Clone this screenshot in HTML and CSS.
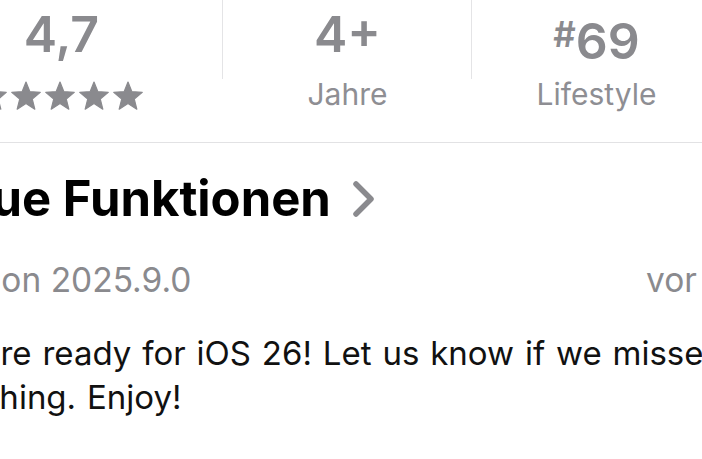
FILE: index.html
```html
<!DOCTYPE html>
<html lang="de">
    <head>
        <meta charset="UTF-8">
        <meta name="viewport" content="width=device-width, initial-scale=1.0">
        <title>App Store – Neue Funktionen</title>
        <link rel="stylesheet" href="styles.css">
    </head>
    <body>
        <div class="stats">
            <div class="stat">
                <div class="stat-value">4,7</div>
                <div class="stars">
                    <svg viewBox="0 0 170 30" width="170" height="30">
                        <g fill="#8a8a8e" stroke="#8a8a8e" stroke-width="1.2" stroke-linejoin="round">
                            <path id="star" d="M15 1L18.88 10.66 29.27 11.36 21.28 18.04 23.82 28.14 15 22.6 6.18 28.14 8.72 18.04 0.73 11.36 11.12 10.66Z"/>
                            <use href="#star" x="34"/>
                            <use href="#star" x="68"/>
                            <use href="#star" x="102"/>
                            <use href="#star" x="136"/>
                        </g>
                    </svg>
                </div>
            </div>
            <div class="stat">
                <div class="stat-value">4+</div>
                <div class="stat-label">Jahre</div>
            </div>
            <div class="stat">
                <div class="stat-value"><span class="hash">#</span>69</div>
                <div class="stat-label">Lifestyle</div>
            </div>
        </div>

        <div class="content">
            <h2 class="section-title">
                Neue Funktionen
                <svg class="chevron" viewBox="0 0 24 38" width="24" height="38">
                    <path d="M4 4l15 15-15 15" fill="none" stroke="#8a8a8e" stroke-width="5.5" stroke-linecap="round" stroke-linejoin="round"/>
                </svg>
            </h2>
            <div class="version-row">
                <span class="version">Version 2025.9.0</span>
                <span>vor 2 Tagen</span>
            </div>
            <p class="notes">We're ready for iOS 26! Let us know if we missed anything. Enjoy!</p>
        </div>
    </body>
</html>
```

FILE: styles.css
```css
body, html {
    margin: 0;
    height: 100%;
    background: #fff;
    overflow: hidden;
    font-family: Inter, "Noto Sans", sans-serif;
}

/* info row: rating, age, charts */
.stats {
    display: flex;
    margin-left: -100px;
    height: 142px;
    border-bottom: 1px solid #e2e2e4;
}
.stat {
    flex: 0 0 249px;
    display: flex;
    flex-direction: column;
    align-items: center;
    background: linear-gradient(#e4e4e6, #e4e4e6) right top / 1px 79px no-repeat;
}
.stat:first-child {
    flex-basis: 323px;
}
.stat-value {
    height: 58px;
    margin-top: 5px;
    font-size: 50px;
    font-weight: 600;
    line-height: 58px;
    color: #8a8a8e;
}
.hash {
    font-size: 35px;
    vertical-align: 12px;
}
.stars {
    margin-top: 18px;
    height: 30px;
}
.stars svg {
    display: block;
}
.stat-label {
    margin-top: 13px;
    font-size: 30px;
    line-height: 36px;
    color: #8e8e93;
}

/* what's new */
.content {
    margin-left: -75px;
    width: 909px;
}
.section-title {
    display: flex;
    align-items: center;
    gap: 21px;
    margin: 28px 0 0;
    font-size: 49px;
    font-weight: 700;
    line-height: 56px;
    color: #000;
}
.chevron {
    display: block;
}
.version-row {
    display: flex;
    justify-content: space-between;
    margin-top: 33px;
    font-size: 33.5px;
    line-height: 40px;
    color: #8a8a8e;
}
.version {
    margin-left: -3px;
}
.notes {
    width: 800px;
    margin: 31px 0 0 7px;
    text-indent: 9px;
    font-size: 33px;
    line-height: 44px;
    word-spacing: 1.6px;
    color: #111;
}
```
